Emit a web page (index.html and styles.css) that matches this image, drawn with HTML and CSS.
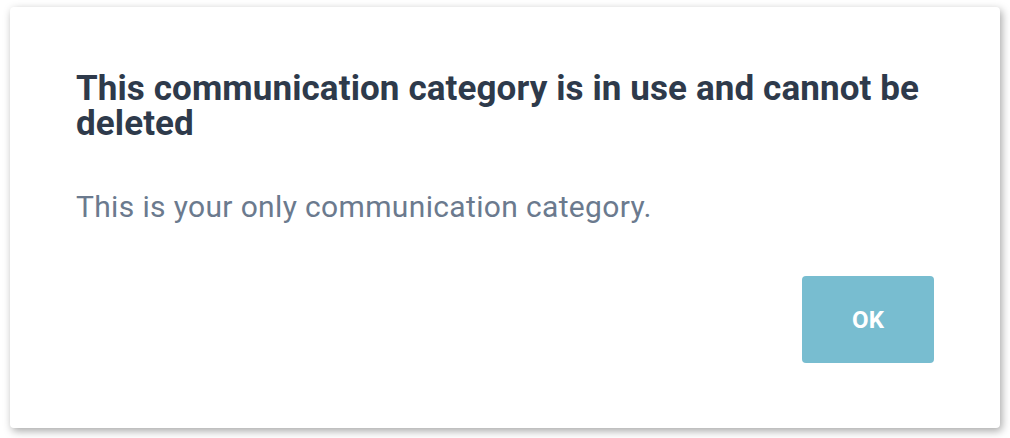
FILE: index.html
```html
<!DOCTYPE html>
<html lang="en">
<head>
    <meta charset="UTF-8">
    <meta name="viewport" content="width=device-width, initial-scale=1.0">
    <title>Category in use</title>
    <link rel="stylesheet" href="styles.css">
</head>
<body>
    <div class="dialog">
        <h1 class="dialog-title">This communication category is in use and cannot be deleted</h1>
        <p class="dialog-text">This is your only communication category.</p>
        <div class="dialog-actions">
            <button class="ok-btn">OK</button>
        </div>
    </div>
</body>
</html>
```

FILE: styles.css
```css
body {
    margin: 0;
    padding: 7px 10px 10px 10px;
    background: #ffffff;
    font-family: Roboto, "Liberation Sans", sans-serif;
}
.dialog {
    box-sizing: border-box;
    width: 990px;
    height: 421px;
    background: #ffffff;
    border-radius: 4px;
    box-shadow: 2px 3px 8px rgba(0, 0, 0, 0.35);
    padding: 64px 66px 0 66px;
}
.dialog-title {
    margin: 0;
    font-size: 35px;
    line-height: 35px;
    letter-spacing: 0.1px;
    font-weight: 700;
    color: #2e3a4b;
}
.dialog-text {
    margin: 48px 0 0 0;
    font-size: 30px;
    line-height: 36px;
    letter-spacing: 0.35px;
    color: #6b7a8e;
}
.dialog-actions {
    display: flex;
    justify-content: flex-end;
    margin-top: 51px;
}
.ok-btn {
    width: 132px;
    height: 87px;
    border: none;
    border-radius: 4px;
    background: #78bdd0;
    color: #ffffff;
    font-family: Roboto, "Liberation Sans", sans-serif;
    font-size: 24px;
    font-weight: 700;
    cursor: pointer;
}
```
